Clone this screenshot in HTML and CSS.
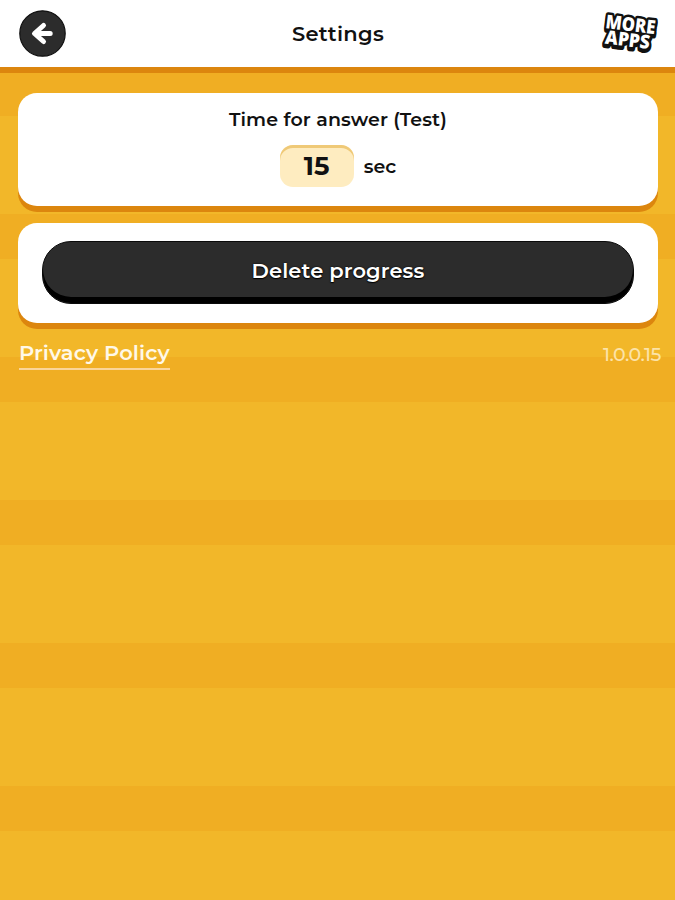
FILE: index.html
```html
<!DOCTYPE html>
<html lang="en">
<head>
  <meta charset="UTF-8">
  <meta name="viewport" content="width=device-width, initial-scale=1.0">
  <title>Settings</title>
  <link rel="stylesheet" href="styles.css">
</head>
<body>
  <header class="header">
    <button class="back" aria-label="Back">
      <svg width="47" height="47" viewBox="0 0 47 47">
        <circle cx="23.5" cy="23.5" r="22.7" fill="#2c2c2c" stroke="#101010" stroke-width="1.2"/>
        <path d="M24.5 15.5 L15.5 23.5 L24.5 31.5 M17 23.5 H31.2" fill="none" stroke="#fff" stroke-width="5" stroke-linecap="round" stroke-linejoin="round"/>
      </svg>
    </button>
    <h1 class="title">Settings</h1>
    <a class="more-apps" href="#" aria-label="More apps">
      <svg width="66" height="60" viewBox="0 -6 66 60">
        <g class="logo logo-shadow" transform="translate(0 2)">
          <text transform="translate(6 18) rotate(7)" textLength="50" lengthAdjust="spacingAndGlyphs">MORE</text>
          <text transform="translate(5.5 33.5) rotate(7)" textLength="45" lengthAdjust="spacingAndGlyphs">APPS</text>
        </g>
        <g class="logo logo-outline">
          <text transform="translate(6 18) rotate(7)" textLength="50" lengthAdjust="spacingAndGlyphs">MORE</text>
          <text transform="translate(5.5 33.5) rotate(7)" textLength="45" lengthAdjust="spacingAndGlyphs">APPS</text>
        </g>
        <g class="logo">
          <text transform="translate(6 18) rotate(7)" textLength="50" lengthAdjust="spacingAndGlyphs">MORE</text>
          <text transform="translate(5.5 33.5) rotate(7)" textLength="45" lengthAdjust="spacingAndGlyphs">APPS</text>
        </g>
      </svg>
    </a>
  </header>

  <main class="content">
    <section class="card time-card">
      <h2 class="label">Time for answer (Test)</h2>
      <div class="time-row">
        <span class="time-value">15</span>
        <span class="unit">sec</span>
      </div>
    </section>

    <section class="card delete-card">
      <button class="delete">Delete progress</button>
    </section>

    <footer class="footer">
      <a class="privacy" href="#">Privacy Policy</a>
      <span class="version">1.0.0.15</span>
    </footer>
  </main>
</body>
</html>
```

FILE: styles.css
```css
* {
  box-sizing: border-box;
}

body {
  margin: 0;
  min-height: 100vh;
  font-family: Montserrat, Inter, sans-serif;
  color: #111111;
  background: repeating-linear-gradient(#f0ae23 0 45px, #f2b729 45px 143px) 0 71px;
}

.header {
  display: flex;
  align-items: center;
  justify-content: space-between;
  height: 73px;
  padding: 0 10px 0 19px;
  background-color: #ffffff;
  border-bottom: 6px solid #dc860e;
}

.back {
  width: 47px;
  height: 47px;
  padding: 0;
  border: none;
  background: none;
  cursor: pointer;
}

.back svg,
.more-apps svg {
  display: block;
}

.title {
  margin: 0 0 0 11px;
  font-size: 21px;
  font-weight: 650;
  letter-spacing: 0.3px;
}

.logo {
  font-family: "Open Sans", sans-serif;
  font-size: 19px;
  font-weight: 800;
  fill: #ffffff;
}

.logo-outline,
.logo-shadow {
  fill: #111111;
  stroke: #111111;
  stroke-width: 5px;
  stroke-linejoin: round;
}

.content {
  padding: 20px 17px 0 18px;
}

.card {
  background-color: #ffffff;
  border-radius: 19px;
  box-shadow: 0 6px 0 #dc860e;
}

.time-card {
  height: 113px;
  margin-bottom: 17px;
  padding-top: 15px;
}

.label {
  margin: 0;
  font-size: 19px;
  font-weight: 600;
  line-height: 23px;
  letter-spacing: 0.1px;
  text-align: center;
}

.time-row {
  display: flex;
  align-items: center;
  justify-content: center;
  gap: 10px;
  margin-top: 14px;
}

.time-value {
  width: 74px;
  height: 42px;
  border-radius: 13px;
  background-color: #feecc0;
  box-shadow: inset 0 3px 0 #efc977;
  font-size: 26px;
  font-weight: 700;
  line-height: 43px;
  text-align: center;
}

.unit {
  font-size: 19px;
  font-weight: 600;
}

.delete-card {
  height: 100px;
  padding: 18px 24px;
}

.delete {
  display: block;
  width: 100%;
  height: 63px;
  padding: 0 0 4px;
  border: 1px solid #0a0a0a;
  border-radius: 29px;
  background-color: #2c2c2c;
  box-shadow: inset 0 -6px 0 #000000;
  color: #ffffff;
  font-family: inherit;
  font-size: 21px;
  font-weight: 600;
  letter-spacing: 0.1px;
  text-shadow: 0 0 2px #000000, 0 1px 1px #000000;
  cursor: pointer;
}

.footer {
  display: flex;
  align-items: flex-start;
  justify-content: space-between;
  margin: 18px -3px 0 1px;
}

.privacy {
  height: 29px;
  border-bottom: 2px solid #fbd59a;
  color: #fff8e8;
  font-size: 21px;
  font-weight: 600;
  line-height: 24px;
  letter-spacing: 0.1px;
  text-decoration: none;
}

.version {
  color: #fce3a8;
  font-size: 19px;
  font-weight: 500;
  line-height: 28px;
  letter-spacing: -0.5px;
}
```
